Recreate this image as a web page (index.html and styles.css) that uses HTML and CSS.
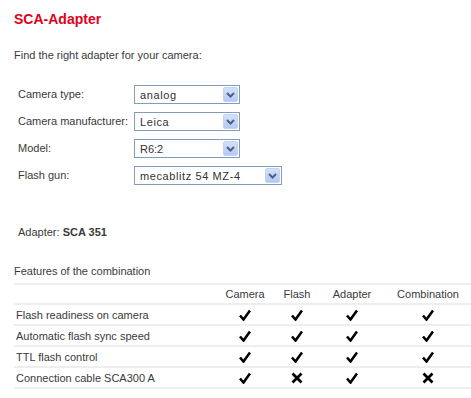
FILE: index.html
```html
<!DOCTYPE html>
<html>
<head>
<meta charset="utf-8">
<link rel="stylesheet" href="styles.css">
</head>
<body>
<div class="page">
  <h1 class="title">SCA-Adapter</h1>
  <p class="intro">Find the right adapter for your camera:</p>

  <div class="form">
    <div class="row">
      <span class="label">Camera type:</span>
      <div class="select"><span class="val spaced">analog</span><span class="arrow"><svg width="9" height="6" viewBox="0 0 9 6"><path d="M1 1 L4.5 4.5 L8 1" fill="none" stroke="#4d6185" stroke-width="2"/></svg></span></div>
    </div>
    <div class="row">
      <span class="label">Camera manufacturer:</span>
      <div class="select"><span class="val spaced">Leica</span><span class="arrow"><svg width="9" height="6" viewBox="0 0 9 6"><path d="M1 1 L4.5 4.5 L8 1" fill="none" stroke="#4d6185" stroke-width="2"/></svg></span></div>
    </div>
    <div class="row">
      <span class="label">Model:</span>
      <div class="select"><span class="val">R6:2</span><span class="arrow"><svg width="9" height="6" viewBox="0 0 9 6"><path d="M1 1 L4.5 4.5 L8 1" fill="none" stroke="#4d6185" stroke-width="2"/></svg></span></div>
    </div>
    <div class="row">
      <span class="label">Flash gun:</span>
      <div class="select wide"><span class="val spaced">mecablitz 54 MZ-4</span><span class="arrow"><svg width="9" height="6" viewBox="0 0 9 6"><path d="M1 1 L4.5 4.5 L8 1" fill="none" stroke="#4d6185" stroke-width="2"/></svg></span></div>
    </div>
  </div>

  <p class="adapter">Adapter: <b>SCA 351</b></p>
  <p class="features">Features of the combination</p>

  <div class="table">
    <div class="tr head"><span></span><span class="c">Camera</span><span class="c">Flash</span><span class="c">Adapter</span><span class="c">Combination</span></div>
    <div class="tr"><span class="name">Flash readiness on camera</span><span class="c ok"></span><span class="c ok"></span><span class="c ok"></span><span class="c ok"></span></div>
    <div class="tr"><span class="name">Automatic flash sync speed</span><span class="c ok"></span><span class="c ok"></span><span class="c ok"></span><span class="c ok"></span></div>
    <div class="tr"><span class="name">TTL flash control</span><span class="c ok"></span><span class="c ok"></span><span class="c ok"></span><span class="c ok"></span></div>
    <div class="tr last"><span class="name">Connection cable SCA300 A</span><span class="c ok"></span><span class="c no"></span><span class="c ok"></span><span class="c no"></span></div>
  </div>
</div>
</body>
</html>
```
FILE: styles.css
```css
html, body { margin: 0; padding: 0; background: #fff; overflow: hidden; }
body { font-family: "Liberation Sans", Arial, sans-serif; font-size: 11px; color: #3a3a3a; }
.page { padding: 10px 0 0 14px; }
.title { margin: 0; font-size: 14px; line-height: 18px; font-weight: bold; color: #e2001a; }
.intro { margin: 20px 0 0; line-height: 14px; }
.form { margin-top: 23px; padding-left: 4px; display: flex; flex-direction: column; gap: 8px; }
.row { display: grid; grid-template-columns: 116px auto; align-items: center; height: 19px; }
.label { line-height: 14px; margin-top: -2px; }
.select { box-sizing: border-box; width: 106px; height: 19px; border: 1px solid #7f9db9; display: flex; align-items: center; justify-content: space-between; padding: 0 1px 0 5px; background: #fff; }
.select.wide { width: 148px; }
.val { color: #333; line-height: 14px; }
.spaced { letter-spacing: 0.6px; }
.arrow { width: 15px; height: 15px; box-sizing: border-box; background: linear-gradient(#d3e0fb, #b5c9f4); border: 1px solid #c3d3f5; border-radius: 2px; display: flex; align-items: center; justify-content: center; }
.adapter { margin: 40px 0 0; padding-left: 4px; line-height: 14px; }
.adapter b { color: #3a3a3a; }
.features { margin: 25px 0 0; line-height: 14px; }
.table { margin-top: 5px; width: 460px; }
.tr { display: grid; grid-template-columns: 204px 54px 50px 60px 92px; height: 19px; border-top: 2px solid #eeeeee; align-items: center; }
.tr.head { height: 18px; }
.tr.last { border-bottom: 2px solid #eeeeee; }
.name { padding-left: 2px; line-height: 14px; }
.c { text-align: center; line-height: 14px; display: flex; justify-content: center; align-items: center; }
.ok::before { content: ""; width: 12px; height: 12px; background: no-repeat center/12px 12px url("data:image/svg+xml,%3Csvg xmlns='http://www.w3.org/2000/svg' viewBox='0 0 12 12'%3E%3Cpath d='M1 6.5 L4.5 10.5 L11 1.5' fill='none' stroke='%23000' stroke-width='2.6'/%3E%3C/svg%3E"); }
.no::before { content: ""; width: 12px; height: 12px; background: no-repeat center/12px 12px url("data:image/svg+xml,%3Csvg xmlns='http://www.w3.org/2000/svg' viewBox='0 0 12 12'%3E%3Cpath d='M1.5 1.5 L10.5 10.5 M10.5 1.5 L1.5 10.5' fill='none' stroke='%23000' stroke-width='2.8'/%3E%3C/svg%3E"); }
```
